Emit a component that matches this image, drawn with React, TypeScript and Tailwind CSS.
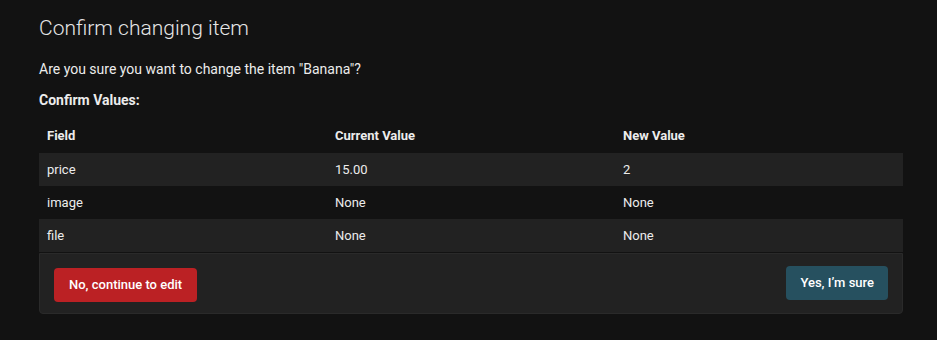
import React from "react";

const rows = [
  { field: "price", current: "15.00", next: "2" },
  { field: "image", current: "None", next: "None" },
  { field: "file", current: "None", next: "None" },
];

export default function App() {
  return (
    <div
      className="w-[937px] h-[340px] bg-[#121212] text-[#ececec] overflow-hidden"
      style={{ fontFamily: "Roboto, 'Noto Sans', sans-serif" }}
    >
      <div className="pl-[39px] pr-[34px] pt-[16px]">
        <h1 className="text-[21px] leading-[25px] font-light text-[#e6e6e6]">
          Confirm changing item
        </h1>
        <p className="mt-[18px] text-[14px] leading-[20px]">
          Are you sure you want to change the item "Banana"?
        </p>
        <p className="mt-[11px] text-[14px] leading-[20px] font-bold">Confirm Values:</p>
        <div className="mt-[9px] text-[13px]">
          <div className="grid grid-cols-3 h-[34px] items-center font-bold">
            <div className="px-[8px]">Field</div>
            <div className="px-[8px]">Current Value</div>
            <div className="px-[8px]">New Value</div>
          </div>
          {rows.map((r, i) => (
            <div
              key={r.field}
              className={`grid grid-cols-3 h-[33px] items-center ${
                i % 2 === 0 ? "bg-[#222222]" : "bg-[#121212]"
              }`}
            >
              <div className="px-[8px]">{r.field}</div>
              <div className="px-[8px]">{r.current}</div>
              <div className="px-[8px]">{r.next}</div>
            </div>
          ))}
          <div className="mt-px h-[61px] bg-[#222222] border border-[#2a2a2a] rounded-b-[4px] flex items-start justify-between px-[14px] pt-[12px]">
            <button className="mt-[2px] h-[34px] px-[15px] rounded-[4px] bg-[#bb2124] text-white text-[13px] font-medium">
              No, continue to edit
            </button>
            <button className="h-[34px] px-[14px] rounded-[4px] bg-[#26505f] text-white text-[13px] font-medium">
              Yes, I’m sure
            </button>
          </div>
        </div>
      </div>
    </div>
  );
}
